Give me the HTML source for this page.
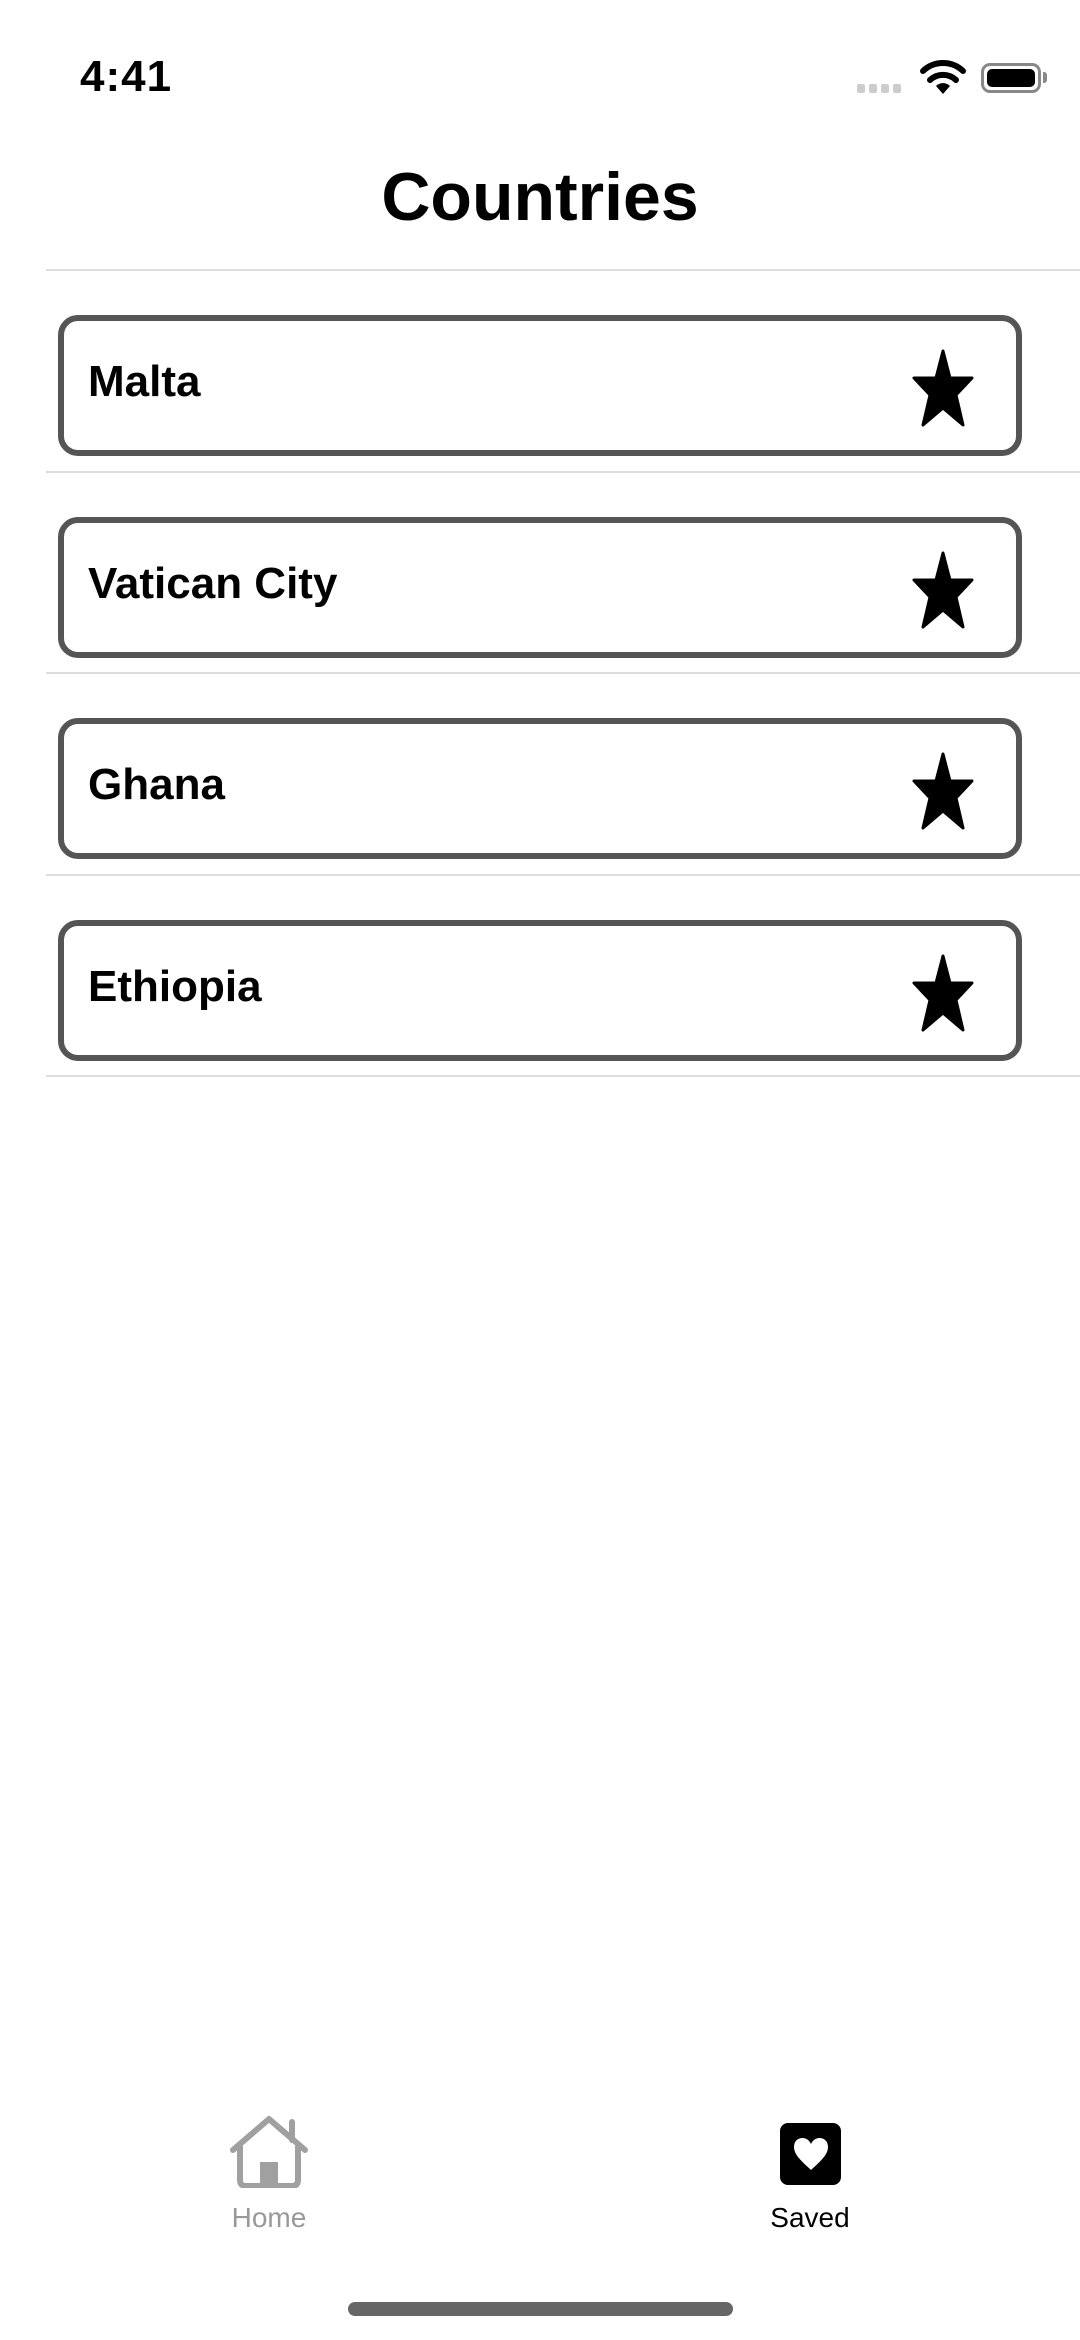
<!DOCTYPE html>
<html><head><meta charset="utf-8"><style>
*{margin:0;padding:0;box-sizing:border-box}
body{width:1080px;height:2340px;background:#fff;position:relative;overflow:hidden;font-family:"Liberation Sans",sans-serif;color:#000}
.abs{position:absolute}
.time{left:80px;top:52px;font-size:44px;font-weight:600;letter-spacing:1px}
.title{left:0;width:1080px;top:158px;text-align:center;font-size:68px;font-weight:700}
.sep{left:46px;right:0;height:2px;background:#ddd}
.card{left:58px;width:964px;height:141px;border:6px solid #555;border-radius:20px}
.card span{position:absolute;left:24px;top:36px;font-size:44px;font-weight:700}
.card svg{position:absolute;right:42px;top:28px}
.lbl{font-size:28px;text-align:center;width:160px}
</style></head><body>
<div class="abs time">4:41</div>
<div class="abs" style="left:857px;top:84px;width:48px;height:9px;">
<div style="display:flex;gap:4px"><i style="width:8px;height:9px;background:#ccc;border-radius:2px"></i><i style="width:8px;height:9px;background:#ccc;border-radius:2px"></i><i style="width:8px;height:9px;background:#ccc;border-radius:2px"></i><i style="width:8px;height:9px;background:#ccc;border-radius:2px"></i></div></div>
<svg class="abs" style="left:920px;top:60px" width="46" height="36" viewBox="0 0 46 36"><path d="M23 34 L16 26 A10 10 0 0 1 30 26 Z" fill="#000"/><path d="M10 20 A19 19 0 0 1 36 20" stroke="#000" stroke-width="6" fill="none" stroke-linecap="round"/><path d="M3 11 A29 29 0 0 1 43 11" stroke="#000" stroke-width="6" fill="none" stroke-linecap="round"/></svg>
<div class="abs" style="left:981px;top:63px;width:60px;height:30px;border:3px solid #888;border-radius:9px;padding:3px"><div style="width:100%;height:100%;background:#000;border-radius:5px"></div></div>
<div class="abs" style="left:1043px;top:72px;width:4px;height:11px;background:#888;border-radius:0 3px 3px 0"></div>
<div class="abs title">Countries</div>
<div class="abs sep" style="top:269px"></div>
<div class="abs card" style="top:315px"><span>Malta</span><svg width="62" height="78" viewBox="0 0 62 78"><path d="M31 2 L38 29 L60 29 L44 46 L51 76 L31 59 L11 76 L18 46 L2 29 L24 29 Z" fill="#000" stroke="#000" stroke-width="3" stroke-linejoin="round"/></svg></div>
<div class="abs sep" style="top:471px"></div>
<div class="abs card" style="top:517px"><span>Vatican City</span><svg width="62" height="78" viewBox="0 0 62 78"><path d="M31 2 L38 29 L60 29 L44 46 L51 76 L31 59 L11 76 L18 46 L2 29 L24 29 Z" fill="#000" stroke="#000" stroke-width="3" stroke-linejoin="round"/></svg></div>
<div class="abs sep" style="top:672px"></div>
<div class="abs card" style="top:718px"><span>Ghana</span><svg width="62" height="78" viewBox="0 0 62 78"><path d="M31 2 L38 29 L60 29 L44 46 L51 76 L31 59 L11 76 L18 46 L2 29 L24 29 Z" fill="#000" stroke="#000" stroke-width="3" stroke-linejoin="round"/></svg></div>
<div class="abs sep" style="top:874px"></div>
<div class="abs card" style="top:920px"><span>Ethiopia</span><svg width="62" height="78" viewBox="0 0 62 78"><path d="M31 2 L38 29 L60 29 L44 46 L51 76 L31 59 L11 76 L18 46 L2 29 L24 29 Z" fill="#000" stroke="#000" stroke-width="3" stroke-linejoin="round"/></svg></div>
<div class="abs sep" style="top:1075px"></div>
<svg class="abs" style="left:229px;top:2116px" width="80" height="72" viewBox="0 0 80 72"><path d="M4 34 L40 3 L76 34" stroke="#a0a0a0" stroke-width="6" fill="none" stroke-linecap="round" stroke-linejoin="round"/><path d="M11 30 V64 Q11 70 17 70 H63 Q69 70 69 64 V30" stroke="#a0a0a0" stroke-width="6" fill="none"/><path d="M63 24 V6" stroke="#a0a0a0" stroke-width="6" stroke-linecap="round"/><rect x="31" y="46" width="18" height="24" fill="#a0a0a0"/></svg>
<div class="abs lbl" style="left:189px;top:2202px;color:#999">Home</div>
<div class="abs" style="left:780px;top:2123px;width:61px;height:62px;background:#000;border-radius:8px"></div>
<svg class="abs" style="left:792px;top:2136px" width="38" height="36" viewBox="0 0 38 36"><path d="M19 34 C8 24 2 18 2 11 C2 5 6 2 10.5 2 C14.5 2 17.5 4.5 19 8 C20.5 4.5 23.5 2 27.5 2 C32 2 36 5 36 11 C36 18 30 24 19 34Z" fill="#fff"/></svg>
<div class="abs lbl" style="left:730px;top:2202px;color:#000;font-weight:500">Saved</div>
<div class="abs" style="left:348px;top:2302px;width:385px;height:14px;background:#666;border-radius:7px"></div>
</body></html>
